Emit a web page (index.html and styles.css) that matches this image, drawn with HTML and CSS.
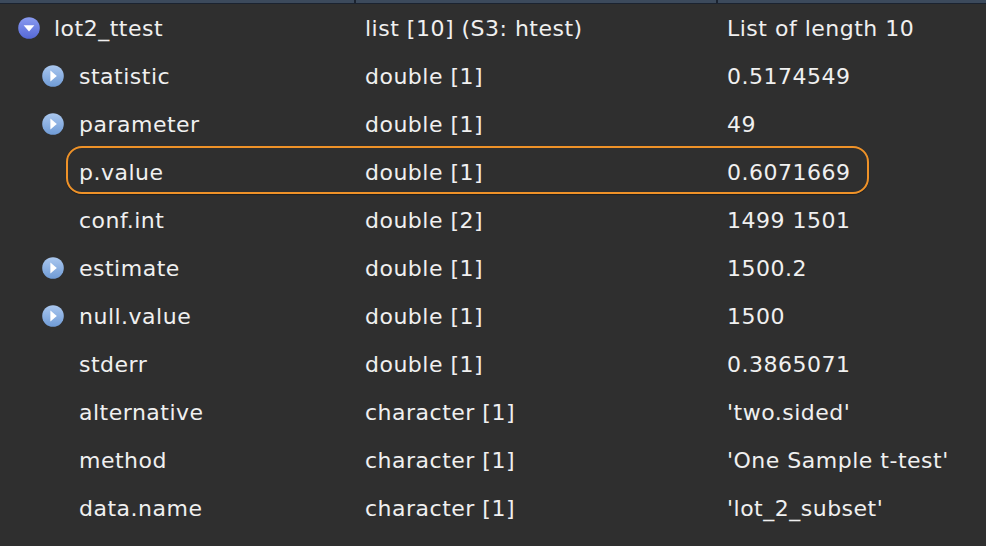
FILE: index.html
```html
<!DOCTYPE html>
<html>
<head>
<meta charset="utf-8">
<link rel="stylesheet" href="styles.css">
</head>
<body>
<div class="panel">
  <div class="header">
    <div class="hcol c1"></div>
    <div class="hcol c2"></div>
    <div class="hcol c3"></div>
  </div>
  <div class="rows">
    <div class="row">
      <div class="name level0"><span class="tog open"><svg viewBox="0 0 22 22" width="22" height="22"><defs><linearGradient id="g1" x1="0" y1="0" x2="0" y2="1"><stop offset="0" stop-color="#8a9bf0"/><stop offset="1" stop-color="#5568d6"/></linearGradient><linearGradient id="g2" x1="0" y1="0" x2="0" y2="1"><stop offset="0" stop-color="#abc8ef"/><stop offset="1" stop-color="#6f9bd6"/></linearGradient></defs><circle cx="11" cy="11" r="10.8" fill="url(#g1)"/><path d="M5.6 8.2 H16.4 L11 14.6 Z" fill="#fff"/></svg></span><span>lot2_ttest</span></div>
      <div class="type">list [10] (S3: htest)</div>
      <div class="val">List of length 10</div>
    </div>
    <div class="row">
      <div class="name level1"><span class="tog"><svg viewBox="0 0 22 22" width="22" height="22"><circle cx="11" cy="11" r="10.8" fill="url(#g2)"/><path d="M8.4 5.6 V16.4 L14.8 11 Z" fill="#fff"/></svg></span><span>statistic</span></div>
      <div class="type">double [1]</div>
      <div class="val">0.5174549</div>
    </div>
    <div class="row">
      <div class="name level1"><span class="tog"><svg viewBox="0 0 22 22" width="22" height="22"><circle cx="11" cy="11" r="10.8" fill="url(#g2)"/><path d="M8.4 5.6 V16.4 L14.8 11 Z" fill="#fff"/></svg></span><span>parameter</span></div>
      <div class="type">double [1]</div>
      <div class="val">49</div>
    </div>
    <div class="row highlight">
      <div class="name level1"><span class="tog none"></span><span>p.value</span></div>
      <div class="type">double [1]</div>
      <div class="val">0.6071669</div>
      <div class="ring"></div>
    </div>
    <div class="row">
      <div class="name level1"><span class="tog none"></span><span>conf.int</span></div>
      <div class="type">double [2]</div>
      <div class="val">1499 1501</div>
    </div>
    <div class="row">
      <div class="name level1"><span class="tog"><svg viewBox="0 0 22 22" width="22" height="22"><circle cx="11" cy="11" r="10.8" fill="url(#g2)"/><path d="M8.4 5.6 V16.4 L14.8 11 Z" fill="#fff"/></svg></span><span>estimate</span></div>
      <div class="type">double [1]</div>
      <div class="val">1500.2</div>
    </div>
    <div class="row">
      <div class="name level1"><span class="tog"><svg viewBox="0 0 22 22" width="22" height="22"><circle cx="11" cy="11" r="10.8" fill="url(#g2)"/><path d="M8.4 5.6 V16.4 L14.8 11 Z" fill="#fff"/></svg></span><span>null.value</span></div>
      <div class="type">double [1]</div>
      <div class="val">1500</div>
    </div>
    <div class="row">
      <div class="name level1"><span class="tog none"></span><span>stderr</span></div>
      <div class="type">double [1]</div>
      <div class="val">0.3865071</div>
    </div>
    <div class="row">
      <div class="name level1"><span class="tog none"></span><span>alternative</span></div>
      <div class="type">character [1]</div>
      <div class="val">'two.sided'</div>
    </div>
    <div class="row">
      <div class="name level1"><span class="tog none"></span><span>method</span></div>
      <div class="type">character [1]</div>
      <div class="val">'One Sample t-test'</div>
    </div>
    <div class="row">
      <div class="name level1"><span class="tog none"></span><span>data.name</span></div>
      <div class="type">character [1]</div>
      <div class="val">'lot_2_subset'</div>
    </div>
  </div>
</div>
</body>
</html>
```

FILE: styles.css
```css
html, body {
  margin: 0;
  padding: 0;
  background: #2f2f2f;
}
.panel {
  width: 986px;
  height: 546px;
  overflow: hidden;
  background: #2f2f2f;
  font-family: "DejaVu Sans", sans-serif;
  font-size: 22px;
  letter-spacing: 0.5px;
  color: #f0f0f0;
}
.header {
  display: grid;
  grid-template-columns: 354px 360px 1fr;
  height: 3px;
  border-bottom: 1px solid #1b2330;
  background: #1b2330;
  column-gap: 2px;
}
.hcol {
  background: #3c4a5c;
  height: 3px;
}
.rows {
  display: flex;
  flex-direction: column;
}
.row {
  position: relative;
  display: grid;
  grid-template-columns: 354px 360px 1fr;
  height: 48px;
  align-items: center;
}
.name {
  display: flex;
  align-items: center;
}
.level0 {
  padding-left: 18px;
}
.level1 {
  padding-left: 42px;
}
.tog {
  width: 22px;
  height: 22px;
  margin-right: 14px;
  flex: none;
  display: block;
}
.tog svg {
  display: block;
}
.level1 .tog {
  margin-right: 15px;
}
.type {
  padding-left: 11px;
}
.val {
  padding-left: 13px;
}
.ring {
  position: absolute;
  left: 66px;
  top: -2px;
  width: 799px;
  height: 44px;
  border: 2.5px solid #ef9228;
  border-radius: 16px;
  box-shadow: 0 1px 1px rgba(0,0,0,0.35);
  pointer-events: none;
}
```
